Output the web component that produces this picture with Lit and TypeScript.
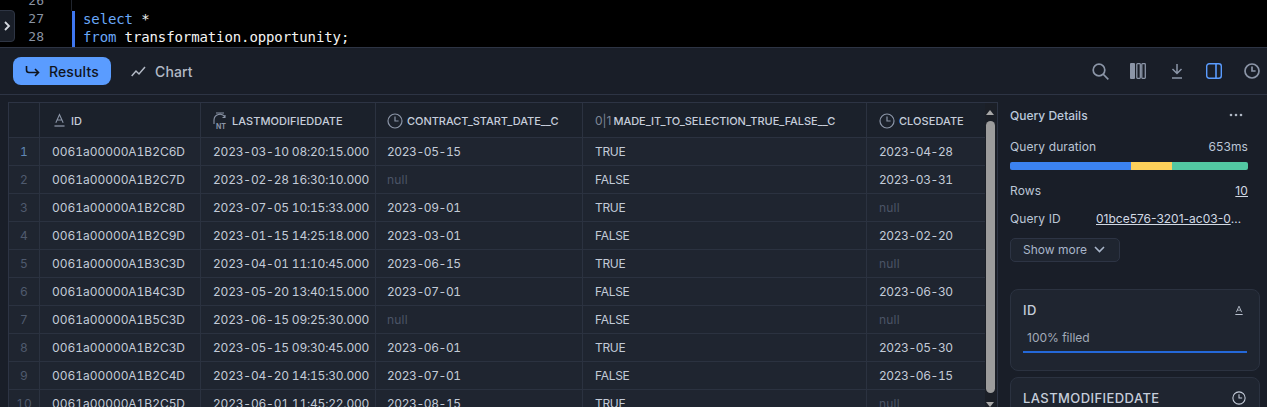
import { LitElement, html, css } from "lit";
import { customElement } from "lit/decorators.js";

const rows = [
  ["0061a00000A1B2C6D", "2023-03-10 08:20:15.000", "2023-05-15", "TRUE", "2023-04-28"],
  ["0061a00000A1B2C7D", "2023-02-28 16:30:10.000", null, "FALSE", "2023-03-31"],
  ["0061a00000A1B2C8D", "2023-07-05 10:15:33.000", "2023-09-01", "TRUE", null],
  ["0061a00000A1B2C9D", "2023-01-15 14:25:18.000", "2023-03-01", "FALSE", "2023-02-20"],
  ["0061a00000A1B3C3D", "2023-04-01 11:10:45.000", "2023-06-15", "TRUE", null],
  ["0061a00000A1B4C3D", "2023-05-20 13:40:15.000", "2023-07-01", "FALSE", "2023-06-30"],
  ["0061a00000A1B5C3D", "2023-06-15 09:25:30.000", null, "FALSE", null],
  ["0061a00000A1B2C3D", "2023-05-15 09:30:45.000", "2023-06-01", "TRUE", "2023-05-30"],
  ["0061a00000A1B2C4D", "2023-04-20 14:15:30.000", "2023-07-01", "FALSE", "2023-06-15"],
  ["0061a00000A1B2C5D", "2023-06-01 11:45:22.000", "2023-08-15", "TRUE", null],
];

const clock = (s: number, c = "#8b95a7", w = 1.2) => html`<svg class="ic" width=${s} height=${s} viewBox="0 0 16 16" fill="none" stroke=${c} stroke-width=${w}><circle cx="8" cy="8" r="7"/><path d="M8 3.600V8h3.600"/></svg>`;
const aIcon = (w: number, h: number, c = "#8b95a7") => html`<svg class="ic" width=${w} height=${h} viewBox="0 0 12 15" fill="none" stroke=${c} stroke-width="1.200"><path d="M2 10 6 1l4 9M3.400 7h5.200"/><path d="M.5 13.500h11" stroke-width="1.400"/></svg>`;
const ntIcon = html`<span class="nt"><svg width="15" height="15" viewBox="0 0 15 15" fill="none" stroke="#8b95a7" stroke-width="1.100"><path d="M3 1h8M1 8a6 6 0 0 1 11-3M12 3v2.500h-2.500M1 8v4"/></svg><b>NT</b></span>`;

@customElement("app-root")
export class AppRoot extends LitElement {
  static styles = css`
    :host { display: block; width: 1267px; height: 407px; overflow: hidden; background: #191e28; font-family: Inter, "Noto Sans", sans-serif; position: relative; }
    .ic { flex: none; display: block; }
    .editor { height: 47px; background: #000; overflow: hidden; display: grid; grid-template-columns: 72px 1fr; font: 14px/18px "DejaVu Sans Mono", monospace; letter-spacing: -0.11px; position: relative; }
    .nums { text-align: right; color: #8a93a3; padding-right: 28px; margin-top: -8px; font-size: 13px; letter-spacing: 0; box-sizing: border-box; width: 72px; }
    .nums div { height: 18px; }
    .code { margin-top: 11px; border-left: 3px solid #3f77f0; padding-left: 9px; height: 36px; box-sizing: border-box; color: #f4f4f4; white-space: pre; }
    .codeinner { margin: -1px 0 0 -1px; }
    .gutter { position: absolute; left: 71px; top: 0; width: 1px; height: 11px; background: #20252e; }
    .kw { color: #6aa9f8; }
    .toggle { position: absolute; left: -1px; top: 10px; width: 16px; height: 32px; background: #191e28; border: 1px solid #2e3544; border-radius: 0 4px 4px 0; display: flex; align-items: center; justify-content: center; box-sizing: border-box; }
    .bar { border-top: 1px solid #2d3444; border-bottom: 1px solid #2d3444; display: flex; align-items: center; padding: 0 7px 0 13px; height: 46px; }
    .tab { display: flex; align-items: center; gap: 9px; height: 28px; border-radius: 8px; font-size: 14px; font-weight: 500; letter-spacing: 0.12px; color: #b3bac6; }
    .tab.on { background: #5a9cff; color: #10141c; width: 98px; padding-left: 12px; box-sizing: border-box; }
    .tab.chart { margin-left: 20px; }
    .tools { margin-left: auto; display: flex; align-items: center; gap: 21px; }
    .tools svg { display: block; }
    .dl { margin: 0 2px 0 4px; }
    .panelicon { margin-right: 1px; }
    .main { display: grid; grid-template-columns: 998px 269px; }
    .tablewrap { padding: 7px 0 0 8px; display: flex; }
    .table { width: 977px; border-top: 1px solid #2d3444; border-left: 1px solid #2d3444; background: #1f2530; }
    .tr { display: grid; grid-template-columns: 31px 161px 175px 207px 284px 118px; height: 28px; box-sizing: border-box; border-bottom: 1px solid #2b3240; }
    .tr.head { height: 35px; background: #1b212b; }
    .cell { border-right: 1px solid #2b3240; display: flex; align-items: center; padding-left: 12px; font-size: 12px; letter-spacing: -0.42px; font-variant-numeric: tabular-nums; color: #c3cbd8; white-space: nowrap; overflow: hidden; }
    .cell:last-child { border-right: 0; }
    .cell.c0 { letter-spacing: -0.04px; }
    .cell.c1 { letter-spacing: -0.2px; }
    .cell.c3 { letter-spacing: -0.3px; }
    .cell.narrow { padding-left: 11px; }
    .cell.n { padding: 0; justify-content: center; color: #4f5a6e; letter-spacing: 0; }
    .cell.n.first { color: #5f87b5; }
    .cell.null { color: #4b5466; letter-spacing: 0.2px; }
    .head .cell { font-weight: 500; font-size: 11px; color: #c6cedb; gap: 4px; letter-spacing: 0.05px; padding-top: 1px; font-variant-numeric: normal; }
    .head .cell.tight { letter-spacing: -0.05px; }
    .head .cell.idh { padding-left: 14px; gap: 6px; }
    .nt { position: relative; width: 15px; height: 18px; display: block; flex: none; }
    .nt b { position: absolute; left: 3px; bottom: -1px; font-size: 7px; color: #8b95a7; font-weight: 700; letter-spacing: 0; line-height: 8px; background: #1b212b; }
    .bits { color: #7d8697; font-size: 12px; font-weight: 400; letter-spacing: 0; flex: none; margin-right: -2px; }
    .scroll { width: 13px; background: #1b1f27; border-right: 1px solid #2d3444; border-top: 1px solid #2d3444; box-sizing: border-box; position: relative; }
    .thumb { width: 9px; margin: 18px 0 0 1px; height: 272px; background: #9c9c9c; border-radius: 5px; }
    .arrow { position: absolute; left: 1px; width: 0; height: 0; border: 4px solid transparent; }
    .up { top: 7px; border-top: 0; border-bottom: 5px solid #a8a8a8; }
    .down { top: 299px; border-bottom: 0; border-top: 5px solid #a8a8a8; }
    .panel { padding: 0 7px 0 12px; color: #bcc6d6; font-size: 12px; height: 312px; overflow: hidden; }
    .ph { display: flex; justify-content: space-between; align-items: center; height: 40px; padding-right: 10px; font-weight: 500; color: #bcc9dc; margin-right: 7px; }
    .kv { display: flex; justify-content: space-between; align-items: center; height: 28px; letter-spacing: 0.1px; margin-right: 12px; }
    .kv.dur { margin-top: -1px; height: 24px; }
    .kv.rows { margin-top: 6px; }
    .stack { display: flex; height: 8px; border-radius: 2px; overflow: hidden; margin: 4px 12px 0 0; }
    .seg { display: block; }
    .link { text-decoration: underline; color: #d2d9e4; }
    .qid { width: 152px; overflow: hidden; text-overflow: ellipsis; white-space: nowrap; letter-spacing: 0; }
    .more { width: 110px; height: 24px; margin-top: 6px; border: 1px solid #2d3444; border-radius: 5px; background: #1f2530; display: flex; align-items: center; gap: 7px; padding: 0 0 1px 12px; box-sizing: border-box; color: #a9b6ca; }
    .card { border: 1px solid #2b3240; border-radius: 8px; background: #1f2530; padding: 10px 12px 0 12px; margin-top: 6px; box-sizing: border-box; }
    .card.a { height: 82px; margin-top: 27px; }
    .card.b { height: 60px; }
    .ch { display: flex; justify-content: space-between; align-items: center; height: 20px; font-weight: 500; font-size: 13px; letter-spacing: 0.42px; color: #c6cedb; }
    .ch .aa { margin-right: 4px; }
    .ch .cc { margin-right: 1px; }
    .fill { margin-top: 3px; height: 30px; padding: 1px 0 0 4px; color: #a3abb8; display: flex; align-items: center; border-bottom: 2px solid #2468d8; box-sizing: border-box; }
  `;

  render() {
    return html`
      <div class="editor">
        <div class="nums"><div>26</div><div>27</div><div>28</div></div>
        <div class="code"><div class="codeinner"><span class="kw">select</span> *
<span class="kw">from</span> transformation.opportunity;</div></div>
        <div class="gutter"></div>
      </div>
      <div class="toggle"><svg width="8" height="10" viewBox="0 0 8 10" fill="none" stroke="#d4d8df" stroke-width="1.800"><path d="M2 1l4 4-4 4"/></svg></div>
      <div class="bar">
        <div class="tab on"><svg width="15" height="13" viewBox="0 0 15 13" fill="none" stroke="#10141c" stroke-width="1.600"><path d="M1.500 1v4q0 2.500 2.500 2.500h9.500M10 4l3.500 3.500L10 11"/></svg>Results</div>
        <div class="tab chart"><svg width="15" height="11" viewBox="0 0 15 11" fill="none" stroke="#b3bac6" stroke-width="1.500"><path d="M.7 10 5 5l3 3 6-7"/></svg>Chart</div>
        <div class="tools">
          <svg width="17" height="17" viewBox="0 0 17 17" fill="none" stroke="#8b95a7" stroke-width="1.700"><circle cx="7" cy="7" r="5.800"/><path d="M11 11l5.300 5.300"/></svg>
          <svg width="16" height="16" viewBox="0 0 16 16"><rect width="5" height="16" rx="1" fill="#8b95a7"/><rect x="6.800" y=".7" width="3.500" height="14.600" rx=".7" fill="none" stroke="#8b95a7" stroke-width="1.300"/><rect x="11.800" y=".7" width="3.500" height="14.600" rx=".7" fill="none" stroke="#8b95a7" stroke-width="1.300"/></svg>
          <svg class="dl" width="12" height="15" viewBox="0 0 12 15" fill="none" stroke="#8b95a7" stroke-width="1.500"><path d="M6 0v9M1.500 5 6 9.500 10.500 5M1 14h10"/></svg>
          <svg class="panelicon" width="16" height="16" viewBox="0 0 16 16" fill="none" stroke="#5a9cff" stroke-width="1.400"><rect x=".7" y=".7" width="14.600" height="14.600" rx="2.500"/><path d="M10 .7v14.600" stroke-width="1.600"/></svg>
          ${clock(16, "#8b95a7", 1.7)}
        </div>
      </div>
      <div class="main">
        <div class="tablewrap">
          <div class="table">
            <div class="tr head">
              <div class="cell"></div>
              <div class="cell idh">${aIcon(11, 15)}<span>ID</span></div>
              <div class="cell">${ntIcon}LASTMODIFIEDDATE</div>
              <div class="cell narrow tight">${clock(16)}CONTRACT_START_DATE__C</div>
              <div class="cell tight"><span class="bits">0|1</span>MADE_IT_TO_SELECTION_TRUE_FALSE__C</div>
              <div class="cell">${clock(16)}CLOSEDATE</div>
            </div>
            ${rows.map((r, i) => html`
              <div class="tr">
                <div class="cell n ${i === 0 ? "first" : ""}">${i + 1}</div>
                ${r.map((v, j) => html`<div class="cell c${j} ${v === null ? "null" : ""} ${j === 2 ? "narrow" : ""}">${v === null ? "null" : v}</div>`)}
              </div>`)}
          </div>
          <div class="scroll"><div class="arrow up"></div><div class="thumb"></div><div class="arrow down"></div></div>
        </div>
        <div class="panel">
          <div class="ph"><span>Query Details</span><svg width="14" height="4" viewBox="0 0 14 4" fill="#aeb6c3"><circle cx="2" cy="2" r="1.300"/><circle cx="7" cy="2" r="1.300"/><circle cx="12" cy="2" r="1.300"/></svg></div>
          <div class="kv dur"><span>Query duration</span><span>653ms</span></div>
          <div class="stack"><span class="seg" style="width:121px;background:#3b82f1"></span><span class="seg" style="width:41px;background:#fdd05a"></span><span class="seg" style="width:76px;background:#52c8a2"></span></div>
          <div class="kv rows"><span>Rows</span><span class="link">10</span></div>
          <div class="kv"><span>Query ID</span><span class="link qid">01bce576-3201-ac03-0000-1f</span></div>
          <div class="more">Show more <svg width="11" height="7" viewBox="0 0 11 7" fill="none" stroke="#a9b6ca" stroke-width="1.600"><path d="M1 1l4.500 4.500L10 1"/></svg></div>
          <div class="card a">
            <div class="ch"><span>ID</span><span class="aa">${aIcon(8, 11, "#c6cedb")}</span></div>
            <div class="fill">100% filled</div>
          </div>
          <div class="card b">
            <div class="ch"><span>LASTMODIFIEDDATE</span><span class="cc">${clock(14, "#c6cedb")}</span></div>
          </div>
        </div>
      </div>
    `;
  }
}
